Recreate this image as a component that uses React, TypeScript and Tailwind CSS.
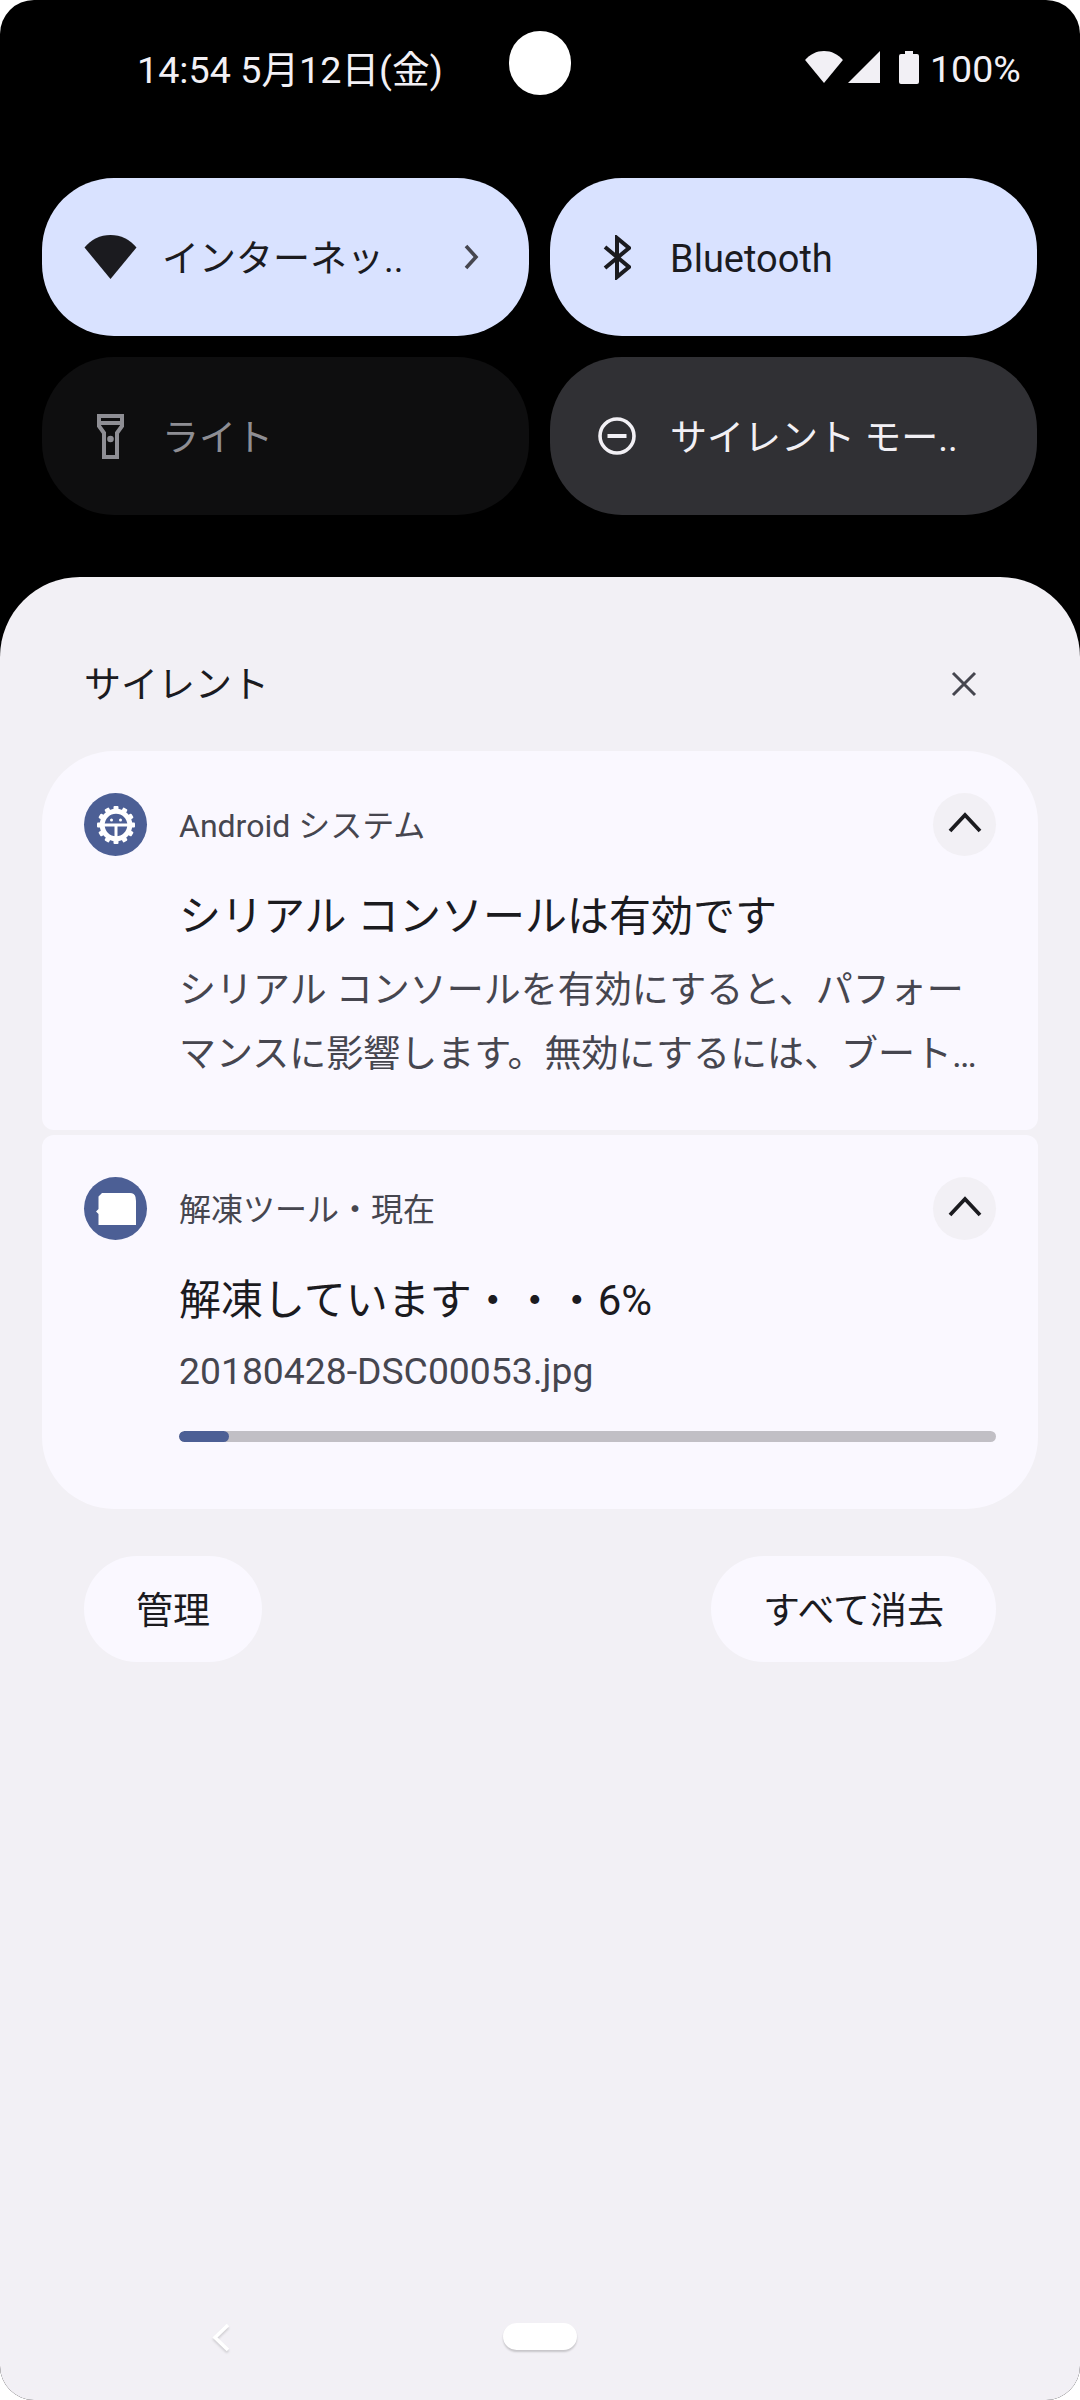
import type { ReactNode } from "react";

const font = { fontFamily: '"Roboto", "Noto Sans CJK JP", sans-serif' };

function Wifi({ className }: { className: string }) {
  return (
    <svg viewBox="0 0 52 44" className={className} fill="currentColor">
      <path d="M0 12.5C6.5 4.6 15.7 0 26 0s19.5 4.6 26 12.5L26 44z" />
    </svg>
  );
}

function Chevron() {
  return (
    <svg viewBox="0 0 36 24" className="w-[36px] h-[24px] mb-[5px] text-[#1b1b1f]" fill="none" stroke="currentColor" strokeWidth="3.8">
      <path d="M3 21 18 5 33 21" />
    </svg>
  );
}

function Tile({
  bg,
  color,
  icon,
  label,
  iconSlot,
  trailing,
}: {
  bg: string;
  color: string;
  icon: ReactNode;
  label: ReactNode;
  iconSlot: string;
  trailing?: ReactNode;
}) {
  return (
    <div className={`h-[158px] rounded-[72px] flex items-center ${bg} ${color}`}>
      <div className={`flex justify-center shrink-0 w-[120px] ${iconSlot}`}>{icon}</div>
      <span className="mt-[5px] text-[37px] leading-[44px] whitespace-nowrap">{label}</span>
      {trailing}
    </div>
  );
}

function IconCircle({ children }: { children: ReactNode }) {
  return (
    <div className="w-[63px] h-[63px] rounded-full bg-[#4c5f95] flex items-center justify-center shrink-0">
      {children}
    </div>
  );
}

function Expand() {
  return (
    <div className="w-[63px] h-[63px] rounded-full bg-[#f2f0f5] flex items-center justify-center shrink-0">
      <Chevron />
    </div>
  );
}

const teeth = [0, 30, 60, 90, 120, 150, 180, 210, 240, 270, 300, 330];

export default function App() {
  return (
    <div style={font} className="w-[1080px] h-[2400px] bg-white">
      <div className="w-[1080px] h-[2400px] bg-black rounded-[34px] overflow-hidden flex flex-col">
        {/* status bar */}
        <div className="relative h-[133px] shrink-0 text-[#f2f0f5]">
          <div className="absolute left-[137px] top-[48px] text-[37.7px] leading-[44px] whitespace-nowrap">14:54 5月12日(金)</div>
          <div className="absolute left-[509px] top-[31px] w-[62px] h-[64px] rounded-full bg-white" />
          <div className="absolute left-[805px] top-[51px] flex items-start">
            <Wifi className="w-[38px] h-[32px]" />
            <svg viewBox="0 0 32 32" className="w-[32px] h-[32px] ml-[5px]" fill="currentColor"><path d="M32 0V32H0z" /></svg>
            <svg viewBox="0 0 20 33" className="w-[20px] h-[33px] ml-[19px]" fill="currentColor">
              <path d="M6 0h8v3h4a2 2 0 0 1 2 2v26a2 2 0 0 1-2 2H2a2 2 0 0 1-2-2V5a2 2 0 0 1 2-2h4z" />
            </svg>
            <span className="ml-[11px] -mt-[4px] text-[37.5px] leading-[44px]">100%</span>
          </div>
        </div>
        {/* tiles */}
        <div className="grid grid-cols-2 gap-x-[21px] gap-y-[21px] pl-[42px] pr-[43px] pt-[45px] shrink-0">
          <Tile
            bg="bg-[#d9e2ff]"
            color="text-[#1b1b1f]"
            iconSlot="pl-[16px]"
            icon={<Wifi className="w-[53px] h-[44px]" />}
            label="インターネッ.."
            trailing={
              <svg viewBox="0 0 16 26" className="w-[16px] h-[26px] ml-auto mr-[50px] text-[#46464f]" fill="none" stroke="currentColor" strokeWidth="3.6">
                <path d="M3 2 13 13 3 24" />
              </svg>
            }
          />
          <Tile
            bg="bg-[#d9e2ff]"
            color="text-[#1b1b1f]"
            iconSlot="pl-[14px]"
            icon={
              <svg viewBox="0 0 28 45" className="w-[28px] h-[45px]" fill="none" stroke="currentColor" strokeWidth="4">
                <path d="M2 12 26 32 14 42V3L26 13 2 33" />
              </svg>
            }
            label={<span className="text-[38px]">Bluetooth</span>}
          />
          <Tile
            bg="bg-[#0e0e0f]"
            color="text-[#8e8e94]"
            iconSlot="pl-[16px]"
            icon={
              <svg viewBox="0 0 27 45" className="w-[27px] h-[45px]" fill="none" stroke="currentColor" strokeWidth="4">
                <path d="M2 2H25V12L20 19V43H7V19L2 12Z" />
                <path d="M2 9H25" />
                <circle cx="13.5" cy="25" r="3.3" fill="currentColor" stroke="none" />
              </svg>
            }
            label="ライト"
          />
          <Tile
            bg="bg-[#303034]"
            color="text-[#f2f0f5]"
            iconSlot="pl-[14px]"
            icon={
              <svg viewBox="0 0 38 38" className="w-[38px] h-[38px]" fill="none" stroke="currentColor" strokeWidth="3.6">
                <circle cx="19" cy="19" r="17" />
                <path d="M9.5 19H28.5" strokeWidth="4" />
              </svg>
            }
            label="サイレント モー.."
          />
        </div>
        {/* shade */}
        <div className="mt-[62px] flex-1 bg-[#f2f0f5] rounded-t-[80px] px-[42px] relative">
          <div className="h-[174px] flex items-start justify-between pl-[42px] pr-[61px] pt-[85px]">
            <span className="text-[37px] leading-[48px] text-[#1b1b1f]">サイレント</span>
            <svg viewBox="0 0 26 26" className="w-[26px] h-[26px] mt-[9px] text-[#46464f]" fill="none" stroke="currentColor" strokeWidth="3">
              <path d="M2 2 24 24M24 2 2 24" />
            </svg>
          </div>
          {/* card 1 */}
          <div className="h-[379px] bg-[#faf8ff] rounded-t-[72px] rounded-b-[12px] px-[42px] pt-[42px]">
            <div className="flex items-center">
              <IconCircle>
                <svg viewBox="0 0 40 40" className="w-[40px] h-[40px]">
                  <g fill="#fff">
                    {teeth.map((a) => (
                      <rect key={a} x="17.5" y="1" width="5" height="6" rx="1" transform={`rotate(${a} 20 20)`} />
                    ))}
                  </g>
                  <circle cx="20" cy="20" r="13.8" fill="none" stroke="#fff" strokeWidth="5" />
                  <path d="M8 20H32M20 20V32" stroke="#fff" strokeWidth="3" fill="none" />
                  <circle cx="15.5" cy="15" r="1.5" fill="#fff" />
                  <circle cx="24.5" cy="15" r="1.5" fill="#fff" />
                </svg>
              </IconCircle>
              <span className="ml-[32px] pt-[3px] text-[32px] leading-[44px] text-[#46464f] flex-1">Android システム</span>
              <Expand />
            </div>
            <div className="pl-[95px] mt-[33px] text-[42px] leading-[56px] text-[#1b1b1f] whitespace-nowrap">シリアル コンソールは有効です</div>
            <div className="pl-[95px] mt-[14px] text-[37px] leading-[64px] text-[#46464f]">
              <div className="whitespace-nowrap">シリアル コンソールを有効にすると、パフォー</div>
              <div className="whitespace-nowrap">マンスに影響します。無効にするには、ブート…</div>
            </div>
          </div>
          {/* card 2 */}
          <div className="h-[374px] mt-[5px] bg-[#faf8ff] rounded-t-[12px] rounded-b-[72px] px-[42px] pt-[42px]">
            <div className="flex items-center">
              <IconCircle>
                <svg viewBox="0 0 40 32" className="w-[40px] h-[32px]" fill="#fff">
                  <path d="M6 0H34Q38.5 0 39.5 4L40 8V32H2.5V21L0 18.5 2.5 16V3.5Z" />
                </svg>
              </IconCircle>
              <span className="ml-[32px] pt-[3px] text-[32px] leading-[44px] text-[#46464f] flex-1">解凍ツール・現在</span>
              <Expand />
            </div>
            <div className="pl-[95px] mt-[33px] text-[42px] leading-[56px] text-[#1b1b1f] whitespace-nowrap">解凍しています・・・6%</div>
            <div className="pl-[95px] mt-[14px] text-[37.3px] leading-[56px] text-[#46464f] whitespace-nowrap">20180428-DSC00053.jpg</div>
            <div className="ml-[95px] mt-[32px] h-[11px] rounded-full bg-[#c1bfc5] overflow-hidden">
              <div className="w-[50px] h-full rounded-full bg-[#4c5f95]" />
            </div>
          </div>
          {/* buttons */}
          <div className="flex justify-between px-[42px] mt-[47px]">
            <div className="h-[106px] w-[178px] pt-[5px] rounded-full bg-[#faf8ff] flex items-center justify-center text-[37px] text-[#1b1b1f]">管理</div>
            <div className="h-[106px] w-[285px] pt-[5px] rounded-full bg-[#faf8ff] flex items-center justify-center text-[37px] text-[#1b1b1f]">すべて消去</div>
          </div>
          {/* nav bar */}
          <svg viewBox="0 0 20 30" className="absolute left-[211px] top-[1746px] w-[20px] h-[30px] drop-shadow-[0_2px_1px_rgba(0,0,0,0.15)]" fill="none" stroke="#fff" strokeWidth="3.6">
            <path d="M17 2 4 14.5 17 27" />
          </svg>
          <div className="absolute left-[503px] top-[1746px] w-[74px] h-[27px] rounded-full bg-white shadow-[0_2px_2px_rgba(0,0,0,0.18)]" />
        </div>
      </div>
    </div>
  );
}
